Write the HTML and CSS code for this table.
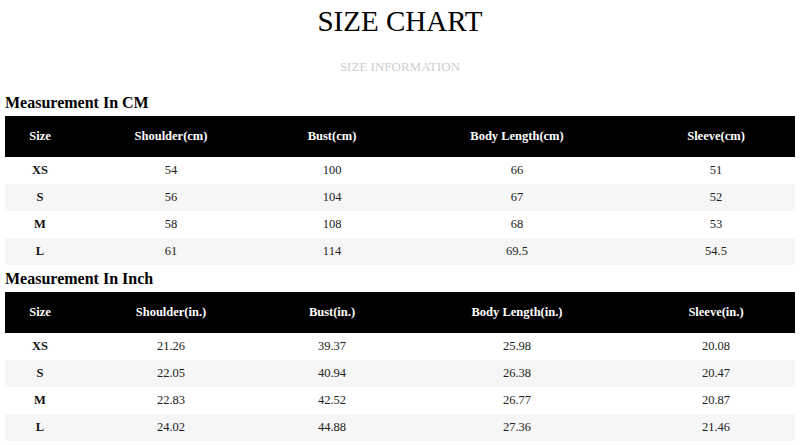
FILE: index.html
```html
<!DOCTYPE html>
<html>
<head>
<meta charset="utf-8">
<link rel="stylesheet" href="styles.css">
</head>
<body>
<div class="page">
  <h1 class="title">SIZE CHART</h1>
  <p class="subtitle">SIZE INFORMATION</p>

  <h2 class="section-title">Measurement In CM</h2>
  <table class="chart">
    <colgroup>
      <col class="c-size"><col class="c-shoulder"><col class="c-bust"><col class="c-length"><col class="c-sleeve">
    </colgroup>
    <thead>
      <tr><th>Size</th><th>Shoulder(cm)</th><th>Bust(cm)</th><th>Body Length(cm)</th><th>Sleeve(cm)</th></tr>
    </thead>
    <tbody>
      <tr><td class="size">XS</td><td>54</td><td>100</td><td>66</td><td>51</td></tr>
      <tr><td class="size">S</td><td>56</td><td>104</td><td>67</td><td>52</td></tr>
      <tr><td class="size">M</td><td>58</td><td>108</td><td>68</td><td>53</td></tr>
      <tr><td class="size">L</td><td>61</td><td>114</td><td>69.5</td><td>54.5</td></tr>
    </tbody>
  </table>

  <h2 class="section-title">Measurement In Inch</h2>
  <table class="chart">
    <colgroup>
      <col class="c-size"><col class="c-shoulder"><col class="c-bust"><col class="c-length"><col class="c-sleeve">
    </colgroup>
    <thead>
      <tr><th>Size</th><th>Shoulder(in.)</th><th>Bust(in.)</th><th>Body Length(in.)</th><th>Sleeve(in.)</th></tr>
    </thead>
    <tbody>
      <tr><td class="size">XS</td><td>21.26</td><td>39.37</td><td>25.98</td><td>20.08</td></tr>
      <tr><td class="size">S</td><td>22.05</td><td>40.94</td><td>26.38</td><td>20.47</td></tr>
      <tr><td class="size">M</td><td>22.83</td><td>42.52</td><td>26.77</td><td>20.87</td></tr>
      <tr><td class="size">L</td><td>24.02</td><td>44.88</td><td>27.36</td><td>21.46</td></tr>
    </tbody>
  </table>
</div>
</body>
</html>
```

FILE: styles.css
```css
html, body {
  margin: 0;
  padding: 0;
  background: #fff;
}

body {
  font-family: "Liberation Serif", "Times New Roman", serif;
  color: #000;
}

.page {
  width: 800px;
  height: 445px;
  overflow: hidden;
}

.title {
  margin: 0;
  padding-top: 7px;
  font-size: 29px;
  line-height: 29px;
  font-weight: normal;
  text-align: center;
  color: #000;
}

.subtitle {
  margin: 24px 0 0;
  font-size: 13px;
  line-height: 13px;
  text-align: center;
  color: #cdcdcd;
}

.section-title {
  margin: 16px 5px 0;
  font-size: 16px;
  line-height: 27px;
  font-weight: bold;
  color: #000;
}

.chart + .section-title {
  margin-top: 0;
}

.chart {
  width: 790px;
  margin: 0 5px;
  border-collapse: collapse;
  border-spacing: 0;
  table-layout: fixed;
}

.c-size { width: 70px; }
.c-shoulder { width: 192px; }
.c-bust { width: 130px; }
.c-length { width: 240px; }
.c-sleeve { width: 158px; }

.chart th {
  height: 41px;
  padding: 0;
  background: #000;
  color: #fff;
  font-size: 12.5px;
  font-weight: bold;
  text-align: center;
  vertical-align: middle;
}

.chart td {
  height: 27px;
  padding: 0;
  font-size: 12.5px;
  color: #222;
  text-align: center;
  vertical-align: middle;
}

.chart td.size {
  font-weight: bold;
  font-size: 12.5px;
  color: #111;
}

.chart tbody tr:nth-child(even) td {
  background: #f6f6f6;
}
```
